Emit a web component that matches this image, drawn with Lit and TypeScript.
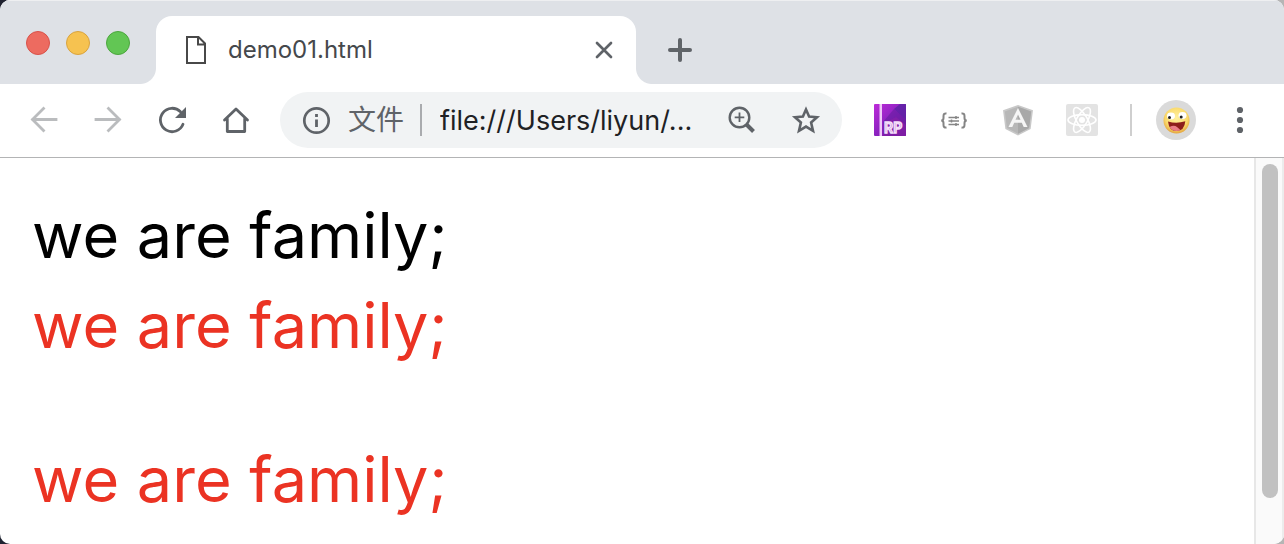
import { LitElement, html, css, svg } from "lit";
import { customElement, property } from "lit/decorators.js";

const glyphs: Record<string, unknown> = {
  page: svg`<path d="M11 7H22.5L29 13.5V33H11Z M22 7V14.5H29" fill="none" stroke="#484848" stroke-width="2"/>`,
  close: svg`<path d="M13 13L27 27M27 13L13 27" stroke="#5f6368" stroke-width="2.7" stroke-linecap="round"/>`,
  plus: svg`<path d="M20 10V30M10 20H30" stroke="#5f6368" stroke-width="4" stroke-linecap="round"/>`,
  back: svg`<path d="M32 19.5H9M19.5 8.5L8.5 19.5L19.5 30.5" fill="none" stroke="#babcbe" stroke-width="2.8" stroke-linecap="square" stroke-linejoin="miter"/>`,
  forward: svg`<path d="M8 19.5H31M20.5 8.5L31.5 19.5L20.5 30.5" fill="none" stroke="#babcbe" stroke-width="2.8" stroke-linecap="square"/>`,
  reload: svg`<path d="M31 24.3A11.7 11.7 0 1 1 28.5 11.8" fill="none" stroke="#5f6368" stroke-width="2.8" stroke-linecap="round"/><path d="M34 7V18H23Z" fill="#5f6368"/>`,
  home: svg`<path d="M8.5 20L20 9L31.5 20M11.3 18.5V31.5H28.7V18.5" fill="none" stroke="#5f6368" stroke-width="2.8" stroke-linejoin="round" stroke-linecap="round"/>`,
  info: svg`<circle cx="20.5" cy="20.5" r="12.2" fill="none" stroke="#5f6368" stroke-width="2.7"/><path d="M20.5 14V17M20.5 19.5V27" stroke="#5f6368" stroke-width="2.8"/>`,
  zoom: svg`<circle cx="17.5" cy="17.5" r="9.8" fill="none" stroke="#5f6368" stroke-width="2.4"/><path d="M24.5 24.5L31.5 31.5" stroke="#5f6368" stroke-width="4"/><path d="M17.5 12.5V22M12.7 17.3H22.3" stroke="#5f6368" stroke-width="1.8"/>`,
  star: svg`<path d="M20 9.5L23.1 16.5L31 17.3L25.1 22.5L27 30.9L20 26.6L13 30.9L14.9 22.5L9 17.3L16.9 16.5Z" fill="none" stroke="#5f6368" stroke-width="2.6"/>`,
  more: svg`<g fill="#5f6368"><circle cx="20" cy="10" r="3.1"/><circle cx="20" cy="20" r="3.1"/><circle cx="20" cy="30" r="3.1"/></g>`,
  axure: svg`<defs><linearGradient id="g" x1="0" y1="0" x2="1" y2="1"><stop offset="0" stop-color="#bd2bd9"/><stop offset=".5" stop-color="#8c22c0"/><stop offset="1" stop-color="#71189b"/></linearGradient></defs>
    <rect x="4" y="4" width="32" height="32" rx="1" fill="url(#g)"/>
    <path d="M13 22L24 9L36 20V36H13Z" fill="#631e9c" opacity=".55"/><path d="M24 9L30 4H36V20Z" fill="#5b22a2" opacity=".8"/><path d="M13 24L26 17L36 25V36H13Z" fill="#8a20a8" opacity=".6"/>
    <rect x="9.5" y="4" width="2.5" height="32" fill="#efc8f7"/>
    <text x="14" y="32.5" font-family="Inter, sans-serif" font-size="14" font-weight="600" fill="#b45cca" stroke="#f3def8" stroke-width="1.4">RP</text>`,
  json: svg`<g fill="none" stroke="#858585" stroke-width="2"><path d="M12.5 13.5Q9.5 13 9.5 16V18Q9.5 20.5 7.2 20.5Q9.5 20.5 9.5 23V25Q9.5 28 12.5 27.5M27.5 13.5Q30.5 13 30.5 16V18Q30.5 20.5 32.8 20.5Q30.5 20.5 30.5 23V25Q30.5 28 27.5 27.5"/><path d="M14.5 17.5H25M14.5 21H25M14.5 24.5H25" stroke-width="1.3"/><path d="M22 16V19M17.5 19.5V22.5M22 23V26" stroke-width="1.5"/></g>`,
  angular: svg`<path d="M20 5L35 10.2L32.6 29L20 35.5L7.4 29L5 10.2Z" fill="#c8c8c8"/><path d="M20 6.8L33.2 11.4L31.1 28L20 33.8L8.9 28L6.8 11.4Z" fill="#b7b7b7"/><path d="M20 6.8L33.2 11.4L31.1 28L20 33.8Z" fill="#a8a8a8"/><path d="M20 8L10.5 27H14.3L16.2 22.7H23.8L25.7 27H29.5ZM20 14.5L22.5 19.8H17.5Z" fill="#f5f5f5" fill-rule="evenodd"/>`,
  react: svg`<rect x="4" y="4" width="32" height="32" rx="2" fill="#e3e3e3"/><g fill="none" stroke="#fff" stroke-width="1.6"><ellipse cx="20" cy="20" rx="14" ry="5.4"/><ellipse cx="20" cy="20" rx="14" ry="5.4" transform="rotate(60 20 20)"/><ellipse cx="20" cy="20" rx="14" ry="5.4" transform="rotate(120 20 20)"/></g><circle cx="20" cy="20" r="3" fill="#fff"/>`,
  face: svg`<defs><radialGradient id="f" cx=".5" cy=".4" r=".6"><stop offset="0" stop-color="#fff1a0"/><stop offset=".7" stop-color="#fada6c"/><stop offset="1" stop-color="#e3a43e"/></radialGradient></defs>
    <circle cx="20" cy="20" r="20" fill="#dadada"/><circle cx="20.5" cy="20.5" r="13" fill="url(#f)"/>
    <ellipse cx="15" cy="16" rx="4" ry="3.4" fill="#fff"/><ellipse cx="26.5" cy="15.5" rx="4" ry="3.4" fill="#fff"/><circle cx="13.5" cy="17.5" r="1.5" fill="#222"/><circle cx="25.2" cy="17" r="1.5" fill="#222"/>
    <path d="M12 21.5Q20.5 24 29.3 21.3Q28.5 31 20.5 31Q13 31 12 21.5Z" fill="#8d1e1b"/><path d="M13.5 27Q18 24.5 21 27T24.5 30.2Q17 32.5 13.5 27Z" fill="#ea7d86"/>`,
};

@customElement("ui-glyph")
export class UiGlyph extends LitElement {
  @property() name = "";

  static styles = css`
    :host { display: block; width: 40px; height: 40px; flex: none; }
    .glyph { display: block; width: 100%; height: 100%; }
  `;

  render() {
    return html`<svg class="glyph" viewBox="0 0 40 40" aria-hidden="true">${glyphs[this.name]}</svg>`;
  }
}

@customElement("app-root")
export class AppRoot extends LitElement {
  static styles = css`
    :host {
      display: block;
      background: linear-gradient(90deg, #1f2230, #b5b5b5);
      font-family: Inter, "Noto Sans CJK SC", sans-serif;
    }
    * { box-sizing: border-box; }
    .window {
      display: flex;
      flex-direction: column;
      height: 100vh;
      overflow: hidden;
      background: #fff;
      border-radius: 10px;
    }
    button {
      padding: 0;
      border: 0;
      background: none;
      flex: none;
      cursor: pointer;
    }
    .strip {
      display: flex;
      align-items: flex-end;
      height: 84px;
      flex: none;
      background: #dee1e6;
      border-top: 1px solid #eeeff1;
    }
    .lights {
      display: flex;
      gap: 16px;
      width: 156px;
      padding: 0 26px 29px;
    }
    .light {
      width: 24px;
      height: 24px;
      border-radius: 50%;
      border: 1px solid #d8524a;
      background: #ed6b60;
    }
    .minimize { background: #f6c250; border-color: #d9a33f; }
    .maximize { background: #62c654; border-color: #4ca63e; }
    .tab {
      position: relative;
      display: flex;
      align-items: center;
      width: 480px;
      height: 68px;
      padding: 0 12px 0 20px;
      background: #fff;
      border-radius: 16px 16px 0 0;
    }
    .tab::before,
    .tab::after {
      content: "";
      position: absolute;
      bottom: 0;
      width: 16px;
      height: 16px;
    }
    .tab::before { right: 100%; background: radial-gradient(circle at 0 0, transparent 15.5px, #fff 16.5px); }
    .tab::after { left: 100%; background: radial-gradient(circle at 100% 0, transparent 15.5px, #fff 16.5px); }
    .title {
      flex: 1;
      margin-left: 12px;
      font-size: 24px;
      line-height: 32px;
      color: #45484c;
    }
    .add { margin: 0 24px 14px; }
    .toolbar {
      display: flex;
      align-items: center;
      gap: 24px;
      flex: none;
      padding: 8px 24px 9px;
      border-bottom: 1px solid #b3b4b5;
    }
    .omnibox {
      display: flex;
      align-items: center;
      flex: 1;
      min-width: 0;
      height: 56px;
      padding: 0 16px;
      border-radius: 28px;
      background: #f1f3f4;
      font-size: 27px;
    }
    .scheme {
      flex: none;
      margin: 0 16px 0 12px;
      color: #5f6368;
      font-size: 28px;
      line-height: 42px;
    }
    .rule { width: 2px; height: 32px; flex: none; background: #a9abae; }
    .address {
      flex: 1;
      min-width: 0;
      height: 40px;
      padding: 0;
      margin: 0 24px 0 18px;
      border: 0;
      outline: 0;
      background: none;
      font: inherit;
      color: #202124;
    }
    .bookmark { margin-left: 24px; }
    .extensions {
      display: flex;
      gap: 24px;
      margin: 0 4px;
    }
    .divider { width: 2px; height: 32px; background: #cfcfcf; }
    .view {
      display: flex;
      flex: 1;
      min-height: 0;
    }
    .document {
      flex: 1;
      padding: 32px;
      font-size: 63px;
      line-height: 90px;
      color: #000;
    }
    .line { margin: 0; }
    .red { color: #eb3323; }
    .spaced { margin-top: 64px; }
    .scrollbar {
      width: 30px;
      padding: 6px 4px 46px 6px;
      background: #fafafa;
      border-left: 2px solid #e7e7e7;
      border-right: 2px solid #ececec;
    }
    .thumb { height: 100%; border-radius: 8px; background: #c1c1c1; }
  `;

  private iconButton(name: string, label: string, extra = "") {
    return html`<button class=${extra} aria-label=${label}><ui-glyph name=${name}></ui-glyph></button>`;
  }

  render() {
    return html`
      <div class="window">
        <header class="strip">
          <div class="lights">
            <button class="light" aria-label="Close window"></button>
            <button class="light minimize" aria-label="Minimize"></button>
            <button class="light maximize" aria-label="Maximize"></button>
          </div>
          <div class="tab">
            <ui-glyph name="page"></ui-glyph>
            <span class="title">demo01.html</span>
            ${this.iconButton("close", "Close tab")}
          </div>
          ${this.iconButton("plus", "New tab", "add")}
        </header>
        <nav class="toolbar">
          ${this.iconButton("back", "Back")}
          ${this.iconButton("forward", "Forward")}
          ${this.iconButton("reload", "Reload")}
          ${this.iconButton("home", "Home")}
          <div class="omnibox">
            ${this.iconButton("info", "Site information")}
            <label class="scheme" for="address">文件</label>
            <span class="rule"></span>
            <input class="address" id="address" type="text" .value=${"file:///Users/liyun/..."} />
            ${this.iconButton("zoom", "Zoom")}
            ${this.iconButton("star", "Bookmark", "bookmark")}
          </div>
          <div class="extensions">
            ${this.iconButton("axure", "Axure RP")}
            ${this.iconButton("json", "JSON viewer")}
            ${this.iconButton("angular", "Angular")}
            ${this.iconButton("react", "React")}
          </div>
          <span class="divider"></span>
          ${this.iconButton("face", "Profile")}
          ${this.iconButton("more", "Menu")}
        </nav>
        <div class="view">
          <main class="document">
            <p class="line">we are family;</p>
            <p class="line red">we are family;</p>
            <p class="line red spaced">we are family;</p>
          </main>
          <div class="scrollbar"><div class="thumb"></div></div>
        </div>
      </div>
    `;
  }
}
